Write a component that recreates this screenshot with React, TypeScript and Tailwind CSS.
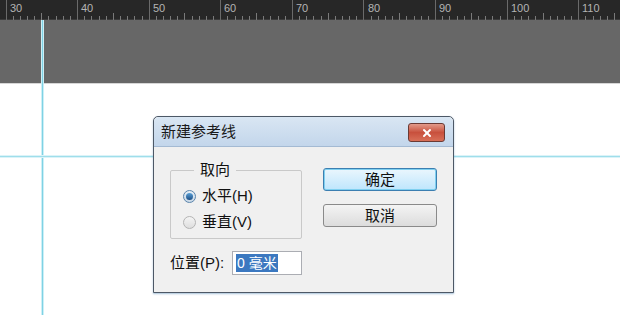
import { X } from "lucide-react";

const labels = ["30", "40", "50", "60", "70", "80", "90", "100", "110"];
const major = 71.6;
const start = 5.5;

function Ruler() {
  const ticks: { x: number; h: number }[] = [];
  for (let i = 0; i < 90; i++) {
    const x = start + (major / 10) * i;
    if (x > 620) break;
    const h = i % 10 === 0 ? 20 : i % 5 === 0 ? 7 : 4;
    ticks.push({ x, h });
  }
  return (
    <div className="relative h-[20px] bg-[#272727] border-b border-[#3a3a3a]">
      <svg className="absolute inset-0" width="620" height="20">
        {ticks.map((t, i) => (
          <line
            key={i}
            x1={Math.round(t.x) + 0.5}
            x2={Math.round(t.x) + 0.5}
            y1={20 - t.h}
            y2={20}
            stroke={t.h === 20 ? "#6a6a6a" : "#7a7a7a"}
            strokeWidth="1"
          />
        ))}
      </svg>
      {labels.map((l, i) => (
        <span
          key={l}
          className="absolute top-[1px] text-[11px] leading-[14px] text-[#b4b4b4]"
          style={{ left: Math.round(start + major * i) + 4 }}
        >
          {l}
        </span>
      ))}
    </div>
  );
}

function Radio({ checked }: { checked?: boolean }) {
  return (
    <span
      className={`flex items-center justify-center w-[13px] h-[13px] rounded-full border ${
        checked
          ? "border-[#5a84ab] bg-gradient-to-b from-[#e6eef6] to-[#c9d8e6]"
          : "border-[#b4b4b4] bg-gradient-to-b from-[#f4f4f4] to-[#dedede]"
      }`}
    >
      {checked && (
        <span className="w-[7px] h-[7px] rounded-full bg-gradient-to-b from-[#5aa0d6] to-[#1d4f86]" />
      )}
    </span>
  );
}

function Dialog() {
  return (
    <div className="absolute left-[153px] top-[116px] w-[301px] h-[177px] flex flex-col border border-[#4d5866] rounded-t-[5px] bg-[#f0f0f0] shadow-[0_1px_2px_rgba(60,120,170,0.45)]">
      <div className="flex justify-between h-[30px] rounded-t-[5px] bg-gradient-to-b from-[#d9e6f3] to-[#c3d6eb] border-b border-[#a4bad3]">
        <span className="pl-[7px] pt-[6px] text-[15px] leading-[18px] text-[#1a1a1a]">
          新建参考线
        </span>
        <div className="mt-[6px] mr-[8px] w-[37px] h-[19px] flex items-center justify-center rounded-[3px] border border-[#6b3a34] bg-gradient-to-b from-[#e29a8a] via-[#c8503d] to-[#d86f58]">
          <X className="w-[12px] h-[12px] text-white" strokeWidth={4} />
        </div>
      </div>
      <div className="flex flex-1 pl-[16px] pr-[16px]">
        <div className="flex flex-col">
          <fieldset className="mt-[14px] w-[132px] h-[78px] border border-[#c9c9c9] rounded-[2px]">
            <legend className="ml-[23px] px-[6px] text-[15px] leading-[18px] text-[#111]">
              取向
            </legend>
            <div className="flex flex-col gap-[8px] pl-[12px] pt-[8px]">
              <label className="flex items-center gap-[6px] text-[15px] leading-[18px] text-[#111]">
                <Radio checked />
                水平(H)
              </label>
              <label className="flex items-center gap-[6px] text-[15px] leading-[18px] text-[#111]">
                <Radio />
                垂直(V)
              </label>
            </div>
          </fieldset>
          <div className="flex items-center mt-[12px]">
            <span className="w-[62px] text-[15px] leading-[18px] text-[#111]">
              位置(P):
            </span>
            <div className="w-[70px] h-[24px] flex items-center pl-[3px] bg-white border border-[#abadb3]">
              <span className="px-[1px] h-[18px] bg-[#3b78c0] text-white text-[14px] leading-[18px]">
                0 毫米
              </span>
            </div>
          </div>
        </div>
        <div className="flex flex-col gap-[13px] ml-auto pt-[21px]">
          <button className="w-[114px] h-[23px] rounded-[3px] border border-[#3c7fb1] bg-gradient-to-b from-[#eaf6fd] to-[#bee6fd] shadow-[inset_0_0_0_1px_#7fd0f0] text-[15px] leading-[18px] text-[#111]">
            确定
          </button>
          <button className="w-[114px] h-[23px] rounded-[3px] border border-[#8a8a8a] bg-gradient-to-b from-[#f4f4f4] to-[#dcdcdc] text-[15px] leading-[18px] text-[#111]">
            取消
          </button>
        </div>
      </div>
    </div>
  );
}

export default function App() {
  return (
    <div className="relative w-[620px] h-[315px] overflow-hidden bg-white font-['Liberation_Sans','Noto_Sans_CJK_SC',sans-serif]">
      <Ruler />
      <div className="h-[64px] bg-[#676767] border-b border-[#d6d6d6]" />
      {/* guides */}
      <div className="absolute left-[41px] top-[20px] w-[3px] h-[295px] bg-[#cdeff6] flex justify-center">
        <div className="w-[1px] h-full bg-[#7fd2e4]" />
      </div>
      <div className="absolute left-0 top-[155px] w-[620px] h-[3px] bg-[#dbf3f8] flex items-center">
        <div className="h-[1px] w-full bg-[#9fdeeb]" />
      </div>
      <Dialog />
    </div>
  );
}
